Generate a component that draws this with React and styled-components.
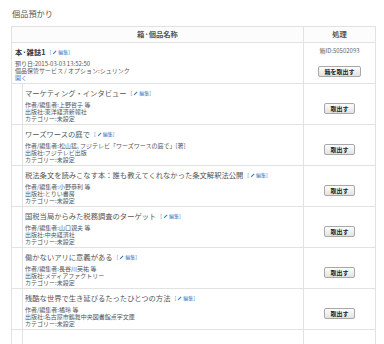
import React from "react";
import styled, { createGlobalStyle } from "styled-components";

const GlobalStyle = createGlobalStyle`
  html, body {
    margin: 0;
    padding: 0;
    background: #fff;
  }
  body {
    font-family: "Noto Sans CJK JP", "Noto Sans", sans-serif;
    color: #444;
  }
`;

const Page = styled.div`
  width: 384px;
  height: 344px;
  overflow: hidden;
  padding: 7px 0 0 11px;
  box-sizing: border-box;
`;

const Heading = styled.h2`
  margin: 0 0 7px 1px;
  font-size: 8.2px;
  line-height: 12px;
  font-weight: normal;
  color: #555;
`;

const Table = styled.table`
  width: 365px;
  border-collapse: collapse;
  table-layout: fixed;
  border: 1px solid #e0e0e0;
`;

const HeadCell = styled.th`
  height: 15px;
  padding: 0;
  font-size: 7.3px;
  line-height: 15px;
  font-weight: bold;
  color: #555;
  background: #fcfcfc;
  border: 1px solid #e2e2e2;
  width: ${({ w }) => (w ? `${w}px` : "auto")};
`;

const MainCell = styled.td`
  height: 41px;
  padding: ${({ nested }) => (nested ? "0 0 0 10px" : "3px 4px 0 3px")};
  border: 1px solid #e2e2e2;
  vertical-align: top;
  box-sizing: border-box;
`;

const ItemBody = styled.div`
  height: 100%;
  box-sizing: border-box;
  border-left: 1px solid #e2e2e2;
  padding: 3px 0 0 2px;
`;

const ActionCell = styled.td`
  padding: 0;
  border: 1px solid #e2e2e2;
  text-align: center;
  vertical-align: middle;
`;

const Title = styled.div`
  height: 12px;
  font-size: 7.3px;
  line-height: 12px;
  margin-bottom: 1.5px;
  white-space: nowrap;
  overflow: hidden;
  font-weight: ${({ strong }) => (strong ? "bold" : "normal")};
  color: ${({ strong }) => (strong ? "#333" : "#555")};
`;

const Detail = styled.div`
  height: 7.2px;
  font-size: 6px;
  line-height: 7.2px;
  color: #555;
  white-space: nowrap;
`;

const Link = styled.a`
  color: #3a78c3;
  text-decoration: none;
  cursor: pointer;
`;

const EditLink = styled.a`
  display: inline-block;
  margin-left: 4px;
  font-size: 5px;
  line-height: 5px;
  font-weight: normal;
  vertical-align: 1px;
  color: #3a78c3;
  text-decoration: none;
  white-space: nowrap;
  cursor: pointer;

  & svg {
    width: 5px;
    height: 5px;
    margin: 0 1px;
    vertical-align: -0.5px;
  }
`;

const BoxId = styled.div`
  font-size: 6px;
  line-height: 7px;
  color: #666;
  margin-bottom: 1px;
`;

const Button = styled.button`
  font-family: inherit;
  font-size: 6px;
  font-weight: bold;
  line-height: 9px;
  height: 11px;
  padding: 0 5px;
  color: #222;
  background: linear-gradient(#fdfdfd, #e2e2e2);
  border: 1px solid #a8a8a8;
  border-radius: 2px;
  cursor: pointer;
`;

const Pencil = () => (
  <svg viewBox="0 0 10 10">
    <path d="M1.5 8.5 L2 6.5 L7.5 1 L9 2.5 L3.5 8 Z" fill="#3a78c3" />
  </svg>
);

function Edit() {
  return (
    <EditLink>
      [<Pencil />編集]
    </EditLink>
  );
}

const items = [
  {
    title: "マーケティング・インタビュー",
    author: "上野哲子 等",
    publisher: "東洋経済新報社",
  },
  {
    title: "ワーズワースの庭で",
    author: "松山猛, フジテレビ「ワーズワースの庭で」[著]",
    publisher: "フジテレビ出版",
  },
  {
    title: "税法条文を読みこなす本：誰も教えてくれなかった条文解釈法公開",
    author: "小野恭利 等",
    publisher: "とりい書房",
  },
  {
    title: "国税当局からみた税務調査のターゲット",
    author: "山口親夫 等",
    publisher: "中央経済社",
  },
  {
    title: "働かないアリに意義がある",
    author: "長谷川英祐 等",
    publisher: "メディアファクトリー",
  },
  {
    title: "残酷な世界で生き延びるたったひとつの方法",
    author: "橘玲 等",
    publisher: "名古屋市鶴舞中央図書館点字文庫",
  },
];

function ItemRow({ item }) {
  return (
    <tr>
      <MainCell nested>
        <ItemBody>
          <Title>
            {item.title}
            <Edit />
          </Title>
          <Detail>作者/編集者:{item.author}</Detail>
          <Detail>出版社:{item.publisher}</Detail>
          <Detail>カテゴリー:未設定</Detail>
        </ItemBody>
      </MainCell>
      <ActionCell>
        <Button>取出す</Button>
      </ActionCell>
    </tr>
  );
}

export default function App() {
  return (
    <Page>
      <GlobalStyle />
      <Heading>個品預かり</Heading>
      <Table>
        <thead>
          <tr>
            <HeadCell>箱·個品名称</HeadCell>
            <HeadCell w={71}>処理</HeadCell>
          </tr>
        </thead>
        <tbody>
          <tr>
            <MainCell>
              <Title strong>
                本·雑誌1
                <Edit />
              </Title>
              <Detail>預り日:2015-03-03 13:52:50</Detail>
              <Detail>個品保管サービス / オプション:シュリンク</Detail>
              <Detail>
                <Link>開く</Link>
              </Detail>
            </MainCell>
            <ActionCell>
              <BoxId>箱ID:50502093</BoxId>
              <Button>箱を取出す</Button>
            </ActionCell>
          </tr>
          {items.map((item) => (
            <ItemRow key={item.title} item={item} />
          ))}
          <tr>
            <MainCell nested>
              <ItemBody />
            </MainCell>
            <ActionCell />
          </tr>
        </tbody>
      </Table>
    </Page>
  );
}
